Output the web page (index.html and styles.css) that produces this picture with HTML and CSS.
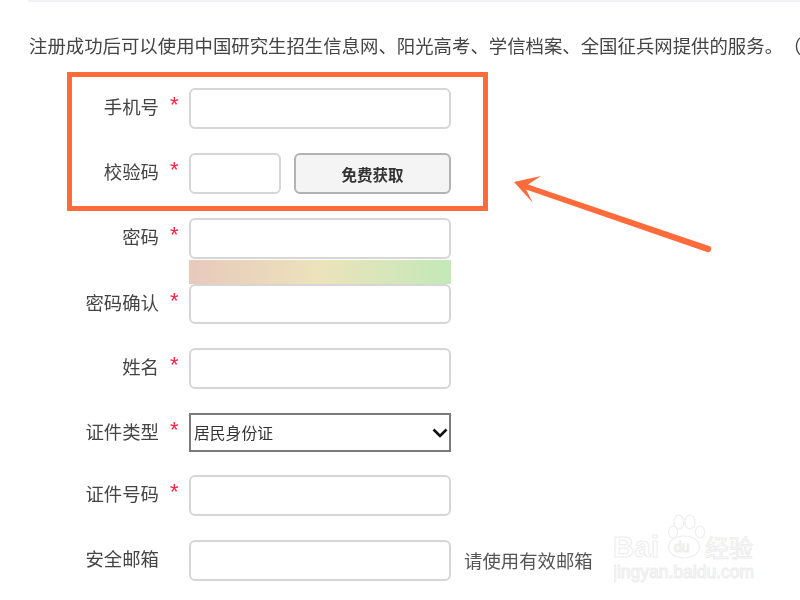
FILE: index.html
```html
<!DOCTYPE html>
<html lang="zh-CN">
<head>
<meta charset="utf-8">
<title>注册</title>
<link rel="stylesheet" href="styles.css">
</head>
<body>
<main class="page">
  <p class="intro">注册成功后可以使用中国研究生招生信息网、阳光高考、学信档案、全国征兵网提供的服务。（</p>
  <form class="form">
    <div class="row"><label class="label">手机号</label><span class="star">*</span><input class="input" type="text"></div>
    <div class="row"><label class="label">校验码</label><span class="star">*</span><input class="input input-code" type="text"><button class="btn" type="button">免费获取</button></div>
    <div class="row row-pw">
      <label class="label">密码</label><span class="star">*</span>
      <div class="pw-field"><input class="input" type="password"><div class="meter"></div></div>
    </div>
    <div class="row row-short"><label class="label">密码确认</label><span class="star">*</span><input class="input input-short" type="password"></div>
    <div class="row"><label class="label">姓名</label><span class="star">*</span><input class="input" type="text"></div>
    <div class="row row-select">
      <label class="label">证件类型</label><span class="star">*</span>
      <div class="select-wrap">
        <select class="select"><option>居民身份证</option></select>
        <svg class="chevron" width="16" height="10" viewBox="0 0 16 10"><path d="M1.500 1.500 8 8l6.500-6.500" fill="none" stroke="#111" stroke-width="2.600"/></svg>
      </div>
    </div>
    <div class="row"><label class="label">证件号码</label><span class="star">*</span><input class="input" type="text"></div>
    <div class="row"><label class="label">安全邮箱</label><span class="star"></span><input class="input" type="email"><span class="hint">请使用有效邮箱</span></div>
  </form>
</main>
<div class="callout"></div>
<svg class="arrow" width="210" height="90" viewBox="0 0 210 90">
  <path d="M0 7 27 1 14 9.500 195 71a3 3 0 0 1-2 6L12 14.500 19 28Z" fill="#ff6b3a"/>
</svg>
<svg class="watermark" width="150" height="90" viewBox="0 0 150 90">
  <g class="wm-paw">
    <ellipse cx="59" cy="27" rx="4.500" ry="6"/>
    <ellipse cx="65" cy="17" rx="5" ry="7"/>
    <ellipse cx="76" cy="17" rx="5" ry="7"/>
    <ellipse cx="86" cy="27" rx="4.500" ry="6"/>
    <ellipse cx="70" cy="42" rx="15.500" ry="11"/>
  </g>
  <text class="wm-big" x="-1" y="52">Bai</text>
  <text class="wm-du" x="60" y="47">du</text>
  <text class="wm-cn" x="91" y="52">经验</text>
  <text class="wm-url" x="-1" y="73">jingyan.baidu.com</text>
</svg>
</body>
</html>
```
FILE: styles.css
```css
* { box-sizing: border-box; }
html, body { margin: 0; padding: 0; background: #fff; }
body {
  position: relative;
  width: 800px;
  height: 600px;
  overflow: hidden;
  font-family: "Noto Sans CJK SC", "Liberation Sans", sans-serif;
  color: #444;
}
.page {
  margin-left: 28px;
  border-top: 2px solid #f1f3f6;
  filter: blur(0.35px);
}
.intro {
  margin: 29px 0 0;
  padding-left: 1px;
  height: 28px;
  line-height: 28px;
  font-size: 18.4px;
  white-space: nowrap;
  text-spacing-trim: space-all;
}
.form {
  display: flex;
  flex-direction: column;
  gap: 24px;
  margin-top: 29px;
}
.row {
  display: flex;
  align-items: flex-start;
  height: 41px;
}
.row-pw { height: 66px; margin-bottom: -24px; }
.row-short { height: 40px; }
.row-select { height: 39px; margin-bottom: -1px; }
.label {
  width: 131px;
  text-align: right;
  font-size: 18.4px;
  line-height: 36px;
  white-space: nowrap;
}
.star {
  width: 30px;
  padding-left: 11px;
  color: #ff1f3d;
  font-size: 22px;
  line-height: 34px;
  font-family: "Liberation Sans", sans-serif;
}
.input {
  display: block;
  width: 262px;
  height: 41px;
  padding: 0 8px;
  background: #fff;
  border: 2px solid #d6d6d6;
  border-radius: 6px;
  outline: none;
}
.input-short { height: 40px; }
.input-code { width: 92px; }
.btn {
  width: 157px;
  height: 41px;
  margin-left: 13px;
  background: #f4f4f4;
  border: 2px solid #b3b3b3;
  border-radius: 6px;
  color: #333;
  font: 700 15.500px "Noto Sans CJK SC", sans-serif;
}
.pw-field { width: 262px; }
.meter {
  height: 24px;
  margin-top: 1px;
  background: linear-gradient(90deg, #e8c9bc 0%, #ece3bb 50%, #c3e9b9 100%);
}
.select-wrap { position: relative; width: 262px; }
.select {
  display: block;
  width: 262px;
  height: 39px;
  padding: 0 3px;
  appearance: none;
  background: #fff;
  border: 2px solid #7a7a7a;
  border-radius: 0;
  color: #333;
  font: 15.800px "Noto Sans CJK SC", sans-serif;
}
.chevron {
  position: absolute;
  top: 15px;
  right: 3px;
  pointer-events: none;
}
.hint {
  margin-left: 13px;
  font-size: 18.4px;
  line-height: 40px;
  white-space: nowrap;
  color: #555;
}
.callout {
  position: absolute;
  left: 67px;
  top: 72px;
  width: 421px;
  height: 139px;
  border: 5px solid #ff6b3a;
}
.arrow {
  position: absolute;
  left: 514px;
  top: 175px;
}
.watermark {
  position: absolute;
  left: 614px;
  top: 505px;
}
.wm-paw {
  fill: #fff;
  stroke: #eeeeee;
  stroke-width: 1.200;
}
.watermark text {
  fill: #fff;
  stroke: #ededed;
  stroke-width: 1;
  font-family: "Liberation Sans", sans-serif;
}
.watermark .wm-big { font-size: 29px; font-weight: 700; letter-spacing: 0.500px; }
.watermark .wm-du { font-size: 14px; }
.watermark .wm-cn { font-size: 24px; font-family: "Noto Sans CJK SC", sans-serif; }
.watermark .wm-url { font-size: 17.500px; }
```
